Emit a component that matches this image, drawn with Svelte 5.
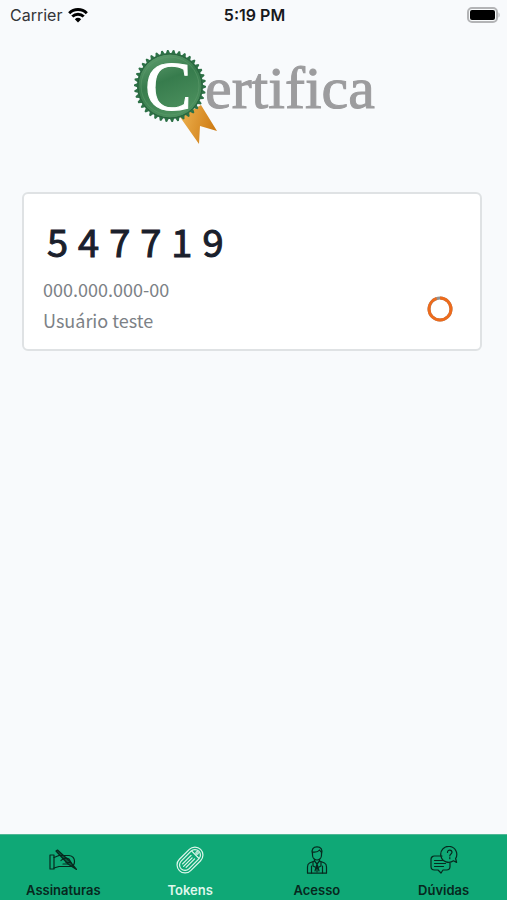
<script lang="ts">
	let activeTab = $state('tokens');

	const tabs = [
		{ id: 'signatures', label: 'Assinaturas' },
		{ id: 'tokens', label: 'Tokens' },
		{ id: 'access', label: 'Acesso' },
		{ id: 'help', label: 'Dúvidas' }
	];

	const token = {
		code: '547719',
		document: '000.000.000-00',
		owner: 'Usuário teste'
	};

	const TEETH = 38;

	function sealPoints(cx: number, cy: number, outer: number, inner: number) {
		const points: string[] = [];
		for (let i = 0; i < TEETH * 4; i++) {
			const angle = (i / (TEETH * 4)) * Math.PI * 2;
			const radius = i % 4 < 2 ? outer : inner;
			points.push(`${(cx + radius * Math.cos(angle)).toFixed(2)},${(cy + radius * Math.sin(angle)).toFixed(2)}`);
		}
		return points.join(' ');
	}
</script>

<div class="app">
	<header class="status-bar">
		<span class="carrier">
			Carrier
			<svg class="wifi" viewBox="0 0 20 15" aria-hidden="true">
				<path d="M1.2 5.2a12.6 12.6 0 0 1 17.6 0" />
				<path d="M4.3 8.5a8.2 8.2 0 0 1 11.4 0" />
				<path class="dot" d="M6.8 11.2a4.7 4.7 0 0 1 6.4 0L10 14.6z" />
			</svg>
		</span>
		<time class="clock">5:19 PM</time>
		<span class="battery">
			<svg viewBox="0 0 34 16" role="img" aria-label="Battery">
				<rect x="1" y="1" width="29" height="14" rx="4" fill="#f8fafb" stroke="#b3b4b6" stroke-width="2" />
				<rect x="3" y="3" width="25" height="10" rx="2" fill="#000" />
				<path d="M31.5 5.5c1.5.6 1.5 4.4 0 5z" fill="#b3b4b6" />
			</svg>
		</span>
	</header>

	<main>
		<svg class="logo" viewBox="0 0 249 104" role="img" aria-label="Certifica">
			<defs>
				<linearGradient id="seal" x1="0" y1="0" x2="0.4" y2="1">
					<stop offset="0" stop-color="#65a273" />
					<stop offset="0.5" stop-color="#377c4d" />
					<stop offset="1" stop-color="#4b8f5d" />
				</linearGradient>
				<linearGradient id="ribbon" x1="0" y1="0" x2="1" y2="0.3">
					<stop offset="0" stop-color="#efb452" />
					<stop offset="1" stop-color="#cf7d16" />
				</linearGradient>
			</defs>
			<polygon points="51,72 70,99 71,81 88,86 72,60" fill="url(#ribbon)" />
			<polygon points={sealPoints(41, 41, 36, 33)} fill="#2d7147" />
			<circle cx="41" cy="41" r="32" fill="url(#seal)" stroke="#28633d" stroke-width="1" />
			<circle cx="41" cy="41" r="29" fill="none" stroke="#5f9b6d" stroke-width="1" opacity="0.5" />
			<text class="logo-rest" x="76" y="63">ertifica</text>
			<text class="logo-initial" x="16" y="65">C</text>
		</svg>

		<section class="token-card">
			<div class="token-info">
				<p class="token-code">{token.code}</p>
				<p class="token-detail">{token.document}</p>
				<p class="token-detail">{token.owner}</p>
			</div>
			<svg class="timer" viewBox="0 0 26 26" role="img" aria-label="Tempo restante">
				<circle cx="13" cy="13" r="11" stroke="#929292" />
				<circle cx="13" cy="13" r="11" stroke="#ed6b1c" pathLength="100" stroke-dasharray="95 5" transform="rotate(-90 13 13)" />
			</svg>
		</section>
	</main>

	<nav class="tab-bar">
		{#each tabs as tab (tab.id)}
			<button
				type="button"
				class="tab"
				class:active={activeTab === tab.id}
				onclick={() => (activeTab = tab.id)}
			>
				<svg class="tab-icon" viewBox="0 0 28 28" aria-hidden="true">
					{#if tab.id === 'signatures'}
						<path d="M1 9h4v14H1z" />
						<path d="M5 11.5l5-2h10c3.5.5 5.5 3 5.5 6s-1.5 4.5-4 5H10l-5 1.5" />
						<path d="M12 14.5c2-2.5 5-3 8-1.5l2 3.5h-5M14 18h5" />
						<path d="M7 5l1.5-1L21 15.5l6.5 8-8.5-5.5z" fill="currentColor" fill-opacity="0.6" />
					{:else if tab.id === 'tokens'}
						<g transform="rotate(-45 14 14)">
							<rect x="-1" y="6" width="30" height="16" rx="8" />
							<rect x="1.500" y="8.500" width="25" height="11" rx="5.500" />
							<path d="M6 11.500h12M5 14h12M6 16.500h12M21.500 9v10" />
							<circle cx="24" cy="14" r="1.200" />
						</g>
					{:else if tab.id === 'access'}
						<path d="M9.5 8C8 3 10.5.8 14 .8S20 3 18.5 8M9.5 6c4 .5 6-.5 7-2l2 2.5M9.5 6v3c0 3 2 5 4.5 5s4.5-2 4.5-5V6" />
						<path d="M11.5 13v2l-5 2c-1.500.7-2 2-2 4v6.200h19V21c0-2-.5-3.300-2-4l-5-2v-2" />
						<path d="M11.5 15l2.5 3 2.5-3M14 18l-2 7M14 18l2 7M8.5 20v7M19.5 20v7M10 16v4l2 1M18 16v4l-2 1M14 20v6" />
					{:else}
						<path d="M12 10H4.5C2.5 10 1 11.5 1 13.5v7C1 22.5 2.5 24 4.5 24H8l3 3 2-3h3.5c2 0 3.5-1.5 3.5-3.5V17" />
						<path d="M4.5 14.5h8M4.5 17.5h11M4.5 20.5h9" />
						<path d="M23.5 14.8A8 8 0 1 1 25.6 12.5l1 4z" />
						<path d="M17.5 6.5c0-3.5 4.5-3 4.5-.2 0 1.7-2.2 1.7-2.2 3.7M19.8 11.5v1.2" />
					{/if}
				</svg>
				<span>{tab.label}</span>
			</button>
		{/each}
	</nav>
</div>

<style>
	:global(body) {
		margin: 0;
		background: #f8fafc;
	}

	.app {
		display: flex;
		flex-direction: column;
		min-height: 100vh;
		font-family: Inter, 'Liberation Sans', sans-serif;
		color: #17191c;
	}

	.status-bar {
		display: grid;
		grid-template-columns: 1fr auto 1fr;
		align-items: center;
		height: 30px;
		padding: 0 6px 0 8px;
		font-size: 16px;
		line-height: 20px;
	}

	.carrier {
		display: flex;
		align-items: center;
		gap: 6px;
		padding-left: 2px;
		color: #333538;
	}

	.wifi {
		width: 20px;
		height: 15px;
		fill: none;
		stroke: #000;
		stroke-width: 3;
	}

	.wifi .dot {
		fill: #000;
		stroke: none;
	}

	.clock {
		font-weight: 600;
	}

	.battery {
		display: flex;
		justify-content: flex-end;
	}

	.battery svg {
		width: 34px;
		height: 16px;
	}

	main {
		flex: 1;
		display: flex;
		flex-direction: column;
		gap: 43px;
		padding: 15px 0 24px;
	}

	.logo {
		width: 249px;
		height: 104px;
		align-self: center;
	}

	.logo text {
		font-family: 'Liberation Serif', serif;
		font-variant-ligatures: none;
	}

	.logo-rest {
		font-size: 60px;
		fill: #9c9c9e;
		stroke: #9c9c9e;
		stroke-width: 1;
	}

	.logo-initial {
		font-size: 70px;
		fill: #fff;
		stroke: #fff;
		stroke-width: 1;
	}

	.token-card {
		display: flex;
		align-items: flex-end;
		justify-content: space-between;
		margin: 0 25px 0 22px;
		padding: 20px 27px 13px 19px;
		border: 2px solid #dfe2e4;
		border-radius: 6px;
		background: #fff;
		font-family: 'Noto Sans CJK JP', 'Noto Sans', sans-serif;
	}

	.token-code {
		margin: 0 0 6px;
		padding-left: 4px;
		font-size: 38px;
		line-height: 54px;
		letter-spacing: 10px;
		color: #1a202c;
		-webkit-text-stroke: 1px #1a202c;
	}

	.token-detail {
		margin: 0;
		font-size: 18px;
		line-height: 31px;
		color: #7c8186;
	}

	.timer {
		width: 26px;
		height: 26px;
		margin-bottom: 14px;
		fill: none;
		stroke-width: 3;
	}

	.tab-bar {
		display: grid;
		grid-template-columns: repeat(4, 1fr);
		position: sticky;
		bottom: 0;
		background: #0fa876;
		border-top: 1px solid #4fb795;
	}

	.tab {
		display: flex;
		flex-direction: column;
		align-items: center;
		gap: 8px;
		padding: 11px 0 2px;
		border: none;
		background: transparent;
		color: #07281e;
		font-family: inherit;
		font-size: 13px;
		font-weight: 600;
		line-height: 16px;
		cursor: pointer;
	}

	.tab.active {
		color: #dff7ec;
	}

	.tab-icon {
		width: 28px;
		height: 28px;
		fill: none;
		stroke: currentColor;
		stroke-width: 1.2;
		stroke-linecap: round;
		stroke-linejoin: round;
	}
</style>
